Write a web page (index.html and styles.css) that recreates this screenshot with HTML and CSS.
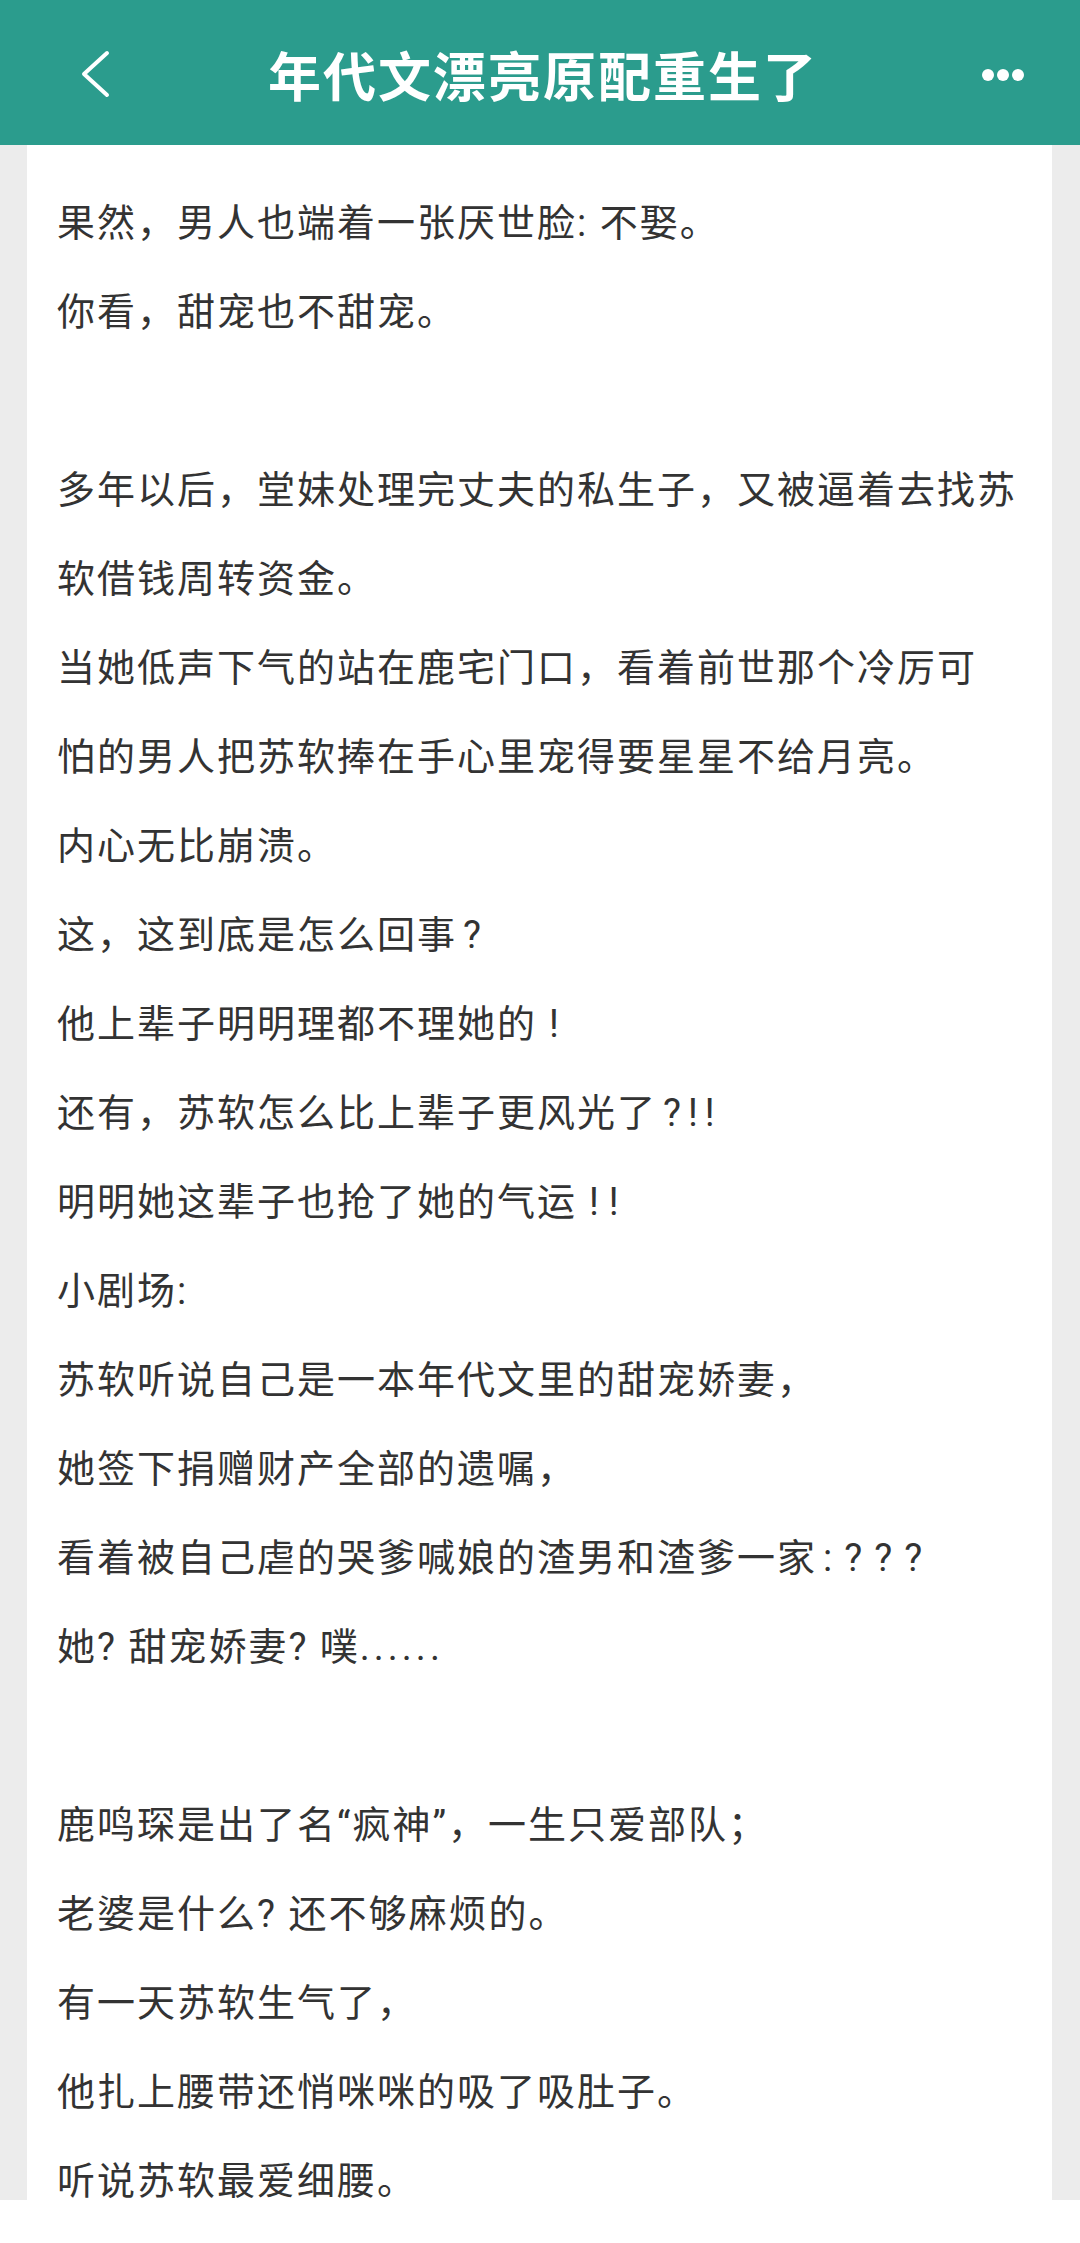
FILE: index.html
```html
<!DOCTYPE html>
<html lang="zh-CN">
<head>
<meta charset="utf-8">
<title>年代文漂亮原配重生了</title>
<link rel="stylesheet" href="styles.css">
</head>
<body>
<header class="topbar">
  <button class="back" aria-label="返回">
    <svg width="52" height="56" viewBox="0 0 52 56"><polyline points="47,6 24,27 47,48" fill="none" stroke="#ffffff" stroke-width="4" stroke-linecap="round" stroke-linejoin="round"/></svg>
  </button>
  <h1 class="title">年代文漂亮原配重生了</h1>
  <button class="more" aria-label="更多">
    <span class="dot"></span><span class="dot"></span><span class="dot"></span>
  </button>
</header>
<main class="page">
  <article class="card">
    <p class="line">果然，男人也端着一张厌世脸: 不娶。</p>
    <p class="line">你看，甜宠也不甜宠。</p>
    <p class="line blank"></p>
    <p class="line">多年以后，堂妹处理完丈夫的私生子，又被逼着去找苏<br>软借钱周转资金。</p>
    <p class="line">当她低声下气的站在鹿宅门口，看着前世那个冷厉可<br>怕的男人把苏软捧在手心里宠得要星星不给月亮。</p>
    <p class="line">内心无比崩溃。</p>
    <p class="line">这，这到底是怎么回事<span class="pun">?</span></p>
    <p class="line">他上辈子明明理都不理她的<span class="pun ex">!</span></p>
    <p class="line">还有，苏软怎么比上辈子更风光了<span class="pun">?!!</span></p>
    <p class="line">明明她这辈子也抢了她的气运<span class="pun ex">!!</span></p>
    <p class="line">小剧场:</p>
    <p class="line">苏软听说自己是一本年代文里的甜宠娇妻，</p>
    <p class="line">她签下捐赠财产全部的遗嘱，</p>
    <p class="line">看着被自己虐的哭爹喊娘的渣男和渣爹一家<span class="pun wide">:???</span></p>
    <p class="line">她? 甜宠娇妻? 噗<span class="dots">......</span></p>
    <p class="line blank"></p>
    <p class="line">鹿鸣琛是出了名“疯神”，一生只爱部队；</p>
    <p class="line">老婆是什么? 还不够麻烦的。</p>
    <p class="line">有一天苏软生气了，</p>
    <p class="line">他扎上腰带还悄咪咪的吸了吸肚子。</p>
    <p class="line">听说苏软最爱细腰。</p>
  </article>
</main>
<footer class="bottom"></footer>
</body>
</html>
```
FILE: styles.css
```css
* { box-sizing: border-box; }
html, body { margin: 0; padding: 0; }
body {
  width: 1080px;
  height: 2243px;
  overflow: hidden;
  background: #ffffff;
  font-family: "Roboto", "Noto Sans CJK SC", sans-serif;
}
.topbar {
  height: 145px;
  background: #2b9c8d;
  display: grid;
  grid-template-columns: 1fr auto 1fr;
  align-items: center;
  padding: 4px 56px 0 60px;
}
.back, .more {
  background: none;
  border: 0;
  padding: 0;
  margin: 0;
  display: flex;
  align-items: center;
  cursor: pointer;
}
.back { justify-self: start; }
.more { justify-self: end; gap: 3px; }
.back svg { display: block; }
.title {
  margin: 0;
  color: #ffffff;
  font-family: "Noto Sans CJK SC", sans-serif;
  font-weight: 700;
  font-size: 53px;
  letter-spacing: 2px;
  line-height: 1;
  padding-left: 2px;
}
.dot {
  width: 12px;
  height: 12px;
  border-radius: 50%;
  background: #ffffff;
}
.page {
  height: 2055px;
  overflow: hidden;
  background: #ececec;
  padding: 0 28px 0 27px;
}
.card {
  height: 100%;
  background: #ffffff;
  padding: 34px 20px 0 30px;
  color: #333333;
  font-size: 38px;
  letter-spacing: 2px;
  line-height: 89px;
}
.line {
  margin: 0;
  white-space: nowrap;
}
.pun {
  margin-left: 6px;
  letter-spacing: 7px;
}
.pun.ex {
  margin-left: 12px;
  letter-spacing: 10px;
}
.pun.wide { letter-spacing: 12px; }
.dots { letter-spacing: 4px; }
.blank { height: 89px; }
.bottom {
  height: 43px;
  background: #ffffff;
}
```
